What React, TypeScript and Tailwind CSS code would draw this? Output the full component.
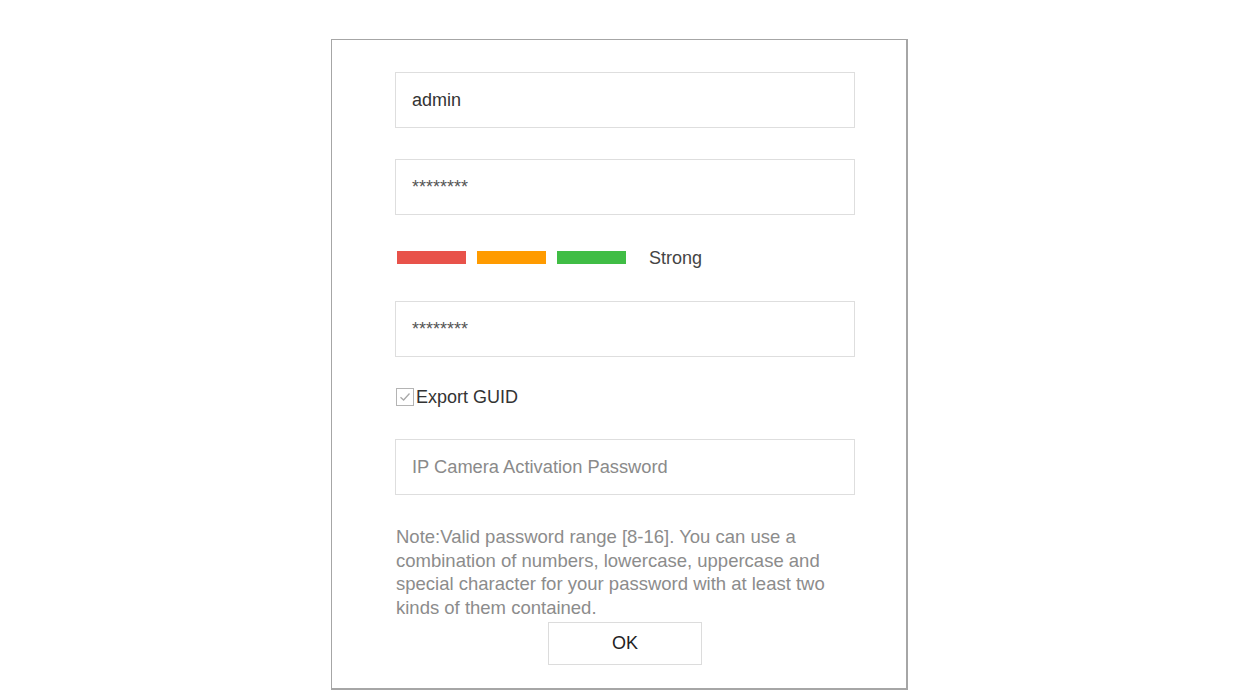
import React from "react";

function Field({ children }: { children: React.ReactNode }) {
  return (
    <div className="w-[460px] h-[56px] border border-[#dedede] bg-white flex items-center pl-[16px]">
      {children}
    </div>
  );
}

export default function App() {
  return (
    <div className="w-[1240px] h-[690px] bg-white overflow-hidden font-['Liberation_Sans',Arial,sans-serif]">
      <div className="ml-[331px] mt-[39px] w-[577px] h-[651px] border-l border-t border-r-2 border-b-2 border-[#a6a6a6] bg-white pl-[63px] pt-[32px]">
        <Field>
          <span className="text-[18px] text-[#333333]">admin</span>
        </Field>
        <div className="mt-[31px]">
          <Field>
            <span className="text-[18px] text-[#555555] leading-none -mt-[1px]">********</span>
          </Field>
        </div>
        <div className="mt-[36px] flex items-center h-[13px]">
          <div className="w-[69px] h-[13px] bg-[#e8524a] ml-[2px]" />
          <div className="w-[69px] h-[13px] bg-[#ff9b00] ml-[11px]" />
          <div className="w-[69px] h-[13px] bg-[#40bd45] ml-[11px]" />
          <span className="ml-[23px] text-[18px] text-[#444444] leading-none">Strong</span>
        </div>
        <div className="mt-[37px]">
          <Field>
            <span className="text-[18px] text-[#555555] leading-none -mt-[1px]">********</span>
          </Field>
        </div>
        <div className="mt-[31px] flex items-center h-[18px]">
          <div className="w-[18px] h-[18px] border border-[#b4b4b4] bg-white flex items-center justify-center ml-[1px]">
            <svg width="14" height="14" viewBox="0 0 14 14">
              <path d="M2.5 7.2 L5.6 10 L11.5 3.5" fill="none" stroke="#a8a8a8" strokeWidth="1.3" />
            </svg>
          </div>
          <span className="ml-[2px] text-[18px] text-[#333333] leading-none">Export GUID</span>
        </div>
        <div className="mt-[33px]">
          <Field>
            <span className="text-[18.3px] text-[#8a8a8a]">IP Camera Activation Password</span>
          </Field>
        </div>
        <p className="mt-[30px] w-[440px] text-[18.5px] leading-[23.5px] text-[#8c8c8c] ml-[1px]">
          Note:Valid password range [8-16]. You can use a combination of numbers, lowercase, uppercase and special character for your password with at least two kinds of them contained.
        </p>
        <div className="mt-[3px] ml-[153px] w-[154px] h-[43px] border border-[#dcdcdc] bg-white flex items-center justify-center">
          <span className="text-[18px] text-[#222222]">OK</span>
        </div>
      </div>
    </div>
  );
}
